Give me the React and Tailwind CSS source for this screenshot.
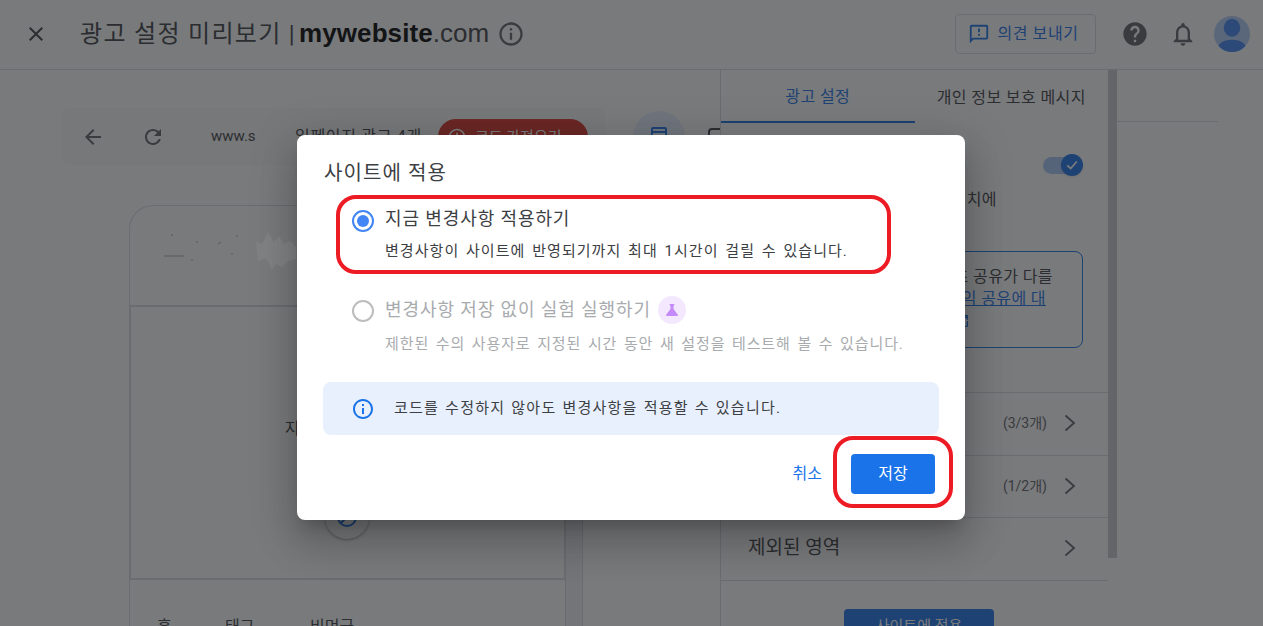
import React from "react";

const Icon = ({ d, className }) => (
  <svg viewBox="0 0 24 24" fill="currentColor" className={className}>
    <path d={d} />
  </svg>
);

const icons = {
  close: "M19 6.41L17.59 5 12 10.59 6.41 5 5 6.41 10.59 12 5 17.59 6.41 19 12 13.41 17.59 19 19 17.59 13.41 12z",
  info: "M11 7h2v2h-2zm0 4h2v6h-2zm1-9C6.48 2 2 6.48 2 12s4.48 10 10 10 10-4.48 10-10S17.52 2 12 2zm0 18c-4.41 0-8-3.59-8-8s3.59-8 8-8 8 3.59 8 8-3.59 8-8 8z",
  help: "M12 2C6.48 2 2 6.48 2 12s4.48 10 10 10 10-4.48 10-10S17.52 2 12 2zm1 17h-2v-2h2v2zm2.07-7.75l-.9.92C13.45 12.9 13 13.5 13 15h-2v-.5c0-1.1.45-2.1 1.17-2.83l1.24-1.26c.37-.36.59-.86.59-1.41 0-1.1-.9-2-2-2s-2 .9-2 2H8c0-2.21 1.79-4 4-4s4 1.79 4 4c0 .88-.36 1.68-.93 2.25z",
  bell: "M12 22c1.1 0 2-.9 2-2h-4c0 1.1.9 2 2 2zm6-6v-5c0-3.07-1.63-5.64-4.5-6.32V4c0-.83-.67-1.5-1.5-1.5s-1.5.67-1.5 1.5v.68C7.64 5.36 6 7.92 6 11v5l-2 2v1h16v-1l-2-2zm-2 1H8v-6c0-2.48 1.51-4.5 4-4.5s4 2.02 4 4.5v6z",
  feedback: "M20 2H4c-1.1 0-2 .9-2 2v18l4-4h14c1.1 0 2-.9 2-2V4c0-1.1-.9-2-2-2zm0 14H5.17L4 17.17V4h16v12zM11 12h2v2h-2zm0-6h2v4h-2z",
  back: "M20 11H7.83l5.59-5.59L12 4l-8 8 8 8 1.41-1.41L7.83 13H20v-2z",
  refresh: "M17.65 6.35C16.2 4.9 14.21 4 12 4c-4.42 0-7.99 3.58-7.99 8s3.57 8 7.99 8c3.73 0 6.84-2.55 7.73-6h-2.08c-.82 2.33-3.04 4-5.65 4-3.31 0-6-2.69-6-6s2.69-6 6-6c1.66 0 3.14.69 4.22 1.78L13 11h7V4l-2.35 2.35z",
  flask: "M19.8 18.4L14 10.67V6.5l1.35-1.69c.26-.33.03-.81-.39-.81H9.04c-.42 0-.65.48-.39.81L10 6.5v4.17L4.2 18.4c-.49.66-.02 1.6.8 1.6h14c.82 0 1.29-.94.8-1.6z",
  person: "M12 12.5a5.5 6 0 1 0 0-12 5.5 6 0 0 0 0 12zM12 14.5c-5 0-9 2-9 5 0 2.6 4 4.5 9 4.5s9-1.900 9-4.500c0-3-4-5-9-5z",
  open: "M19 19H5V5h7V3H5a2 2 0 0 0-2 2v14a2 2 0 0 0 2 2h14c1.100 0 2-.9 2-2v-7h-2v7zM14 3v2h3.590l-9.830 9.830 1.410 1.410L19 6.410V10h2V3h-7z",
};

const Chevron = () => (
  <svg viewBox="0 0 12 18" fill="none" stroke="currentColor" strokeWidth="1.8" className="w-3 h-[18px] text-[#5f6368]">
    <path d="M1.500 1.500 L10 9 L1.500 16.500" />
  </svg>
);

const SettingRow = ({ label, count }) => (
  <div className="h-[62.500px] border-b border-[#dadce0] flex items-center pl-[27px] pr-[32px] pb-[1px] text-[19px] text-[#3c4043]">
    <span>{label}</span>
    {count && <span className="ml-auto mr-[17px] text-sm text-[#5f6368]">{count}</span>}
    <span className={count ? "" : "ml-auto"}>
      <Chevron />
    </span>
  </div>
);

const Header = () => (
  <header className="h-[70px] border-b border-[#dadce0] flex items-center pl-6 pr-[13px] pb-[2px] shrink-0">
    <Icon d={icons.close} className="w-6 h-6 text-[#3c4043]" />
    <h1 className="ml-8 text-[24px] text-[#3c4043] tracking-[1.3px]">광고 설정 미리보기 |</h1>
    <span className="ml-[3px] text-[26px] font-bold text-black font-['Liberation_Sans'] tracking-[0.1px]">mywebsite</span>
    <span className="text-[26px] text-[#3c4043] font-['Liberation_Sans']">.com</span>
    <Icon d={icons.info} className="ml-[8px] w-7 h-7 text-[#5f6368]" />
    <button className="ml-auto w-[141px] h-[40px] border border-[#dadce0] rounded flex items-center justify-center gap-[7px] pr-1 text-[#1a73e8] text-base tracking-[0.6px]">
      <Icon d={icons.feedback} className="w-[22px] h-[22px]" />
      의견 보내기
    </button>
    <Icon d={icons.help} className="ml-[25px] w-7 h-7 text-[#5f6368]" />
    <Icon d={icons.bell} className="ml-[20px] w-7 h-7 text-[#5f6368]" />
    <div className="ml-[17px] w-9 h-9 rounded-full bg-[#b1cdfb] overflow-hidden flex items-center justify-center text-[#4285f4]">
      <Icon d={icons.person} className="w-9 h-9 mt-1" />
    </div>
  </header>
);

const PreviewPane = () => (
  <section className="w-[720px] shrink-0 flex flex-col relative overflow-hidden">
    <div className="mt-[38px] h-[57px] flex items-start shrink-0">
      <div className="ml-[62px] w-[543px] h-[57px] rounded-lg bg-[#f8f9fa] flex items-center pl-[19px] shrink-0">
        <Icon d={icons.back} className="w-6 h-6 text-[#5f6368]" />
        <Icon d={icons.refresh} className="ml-9 w-6 h-6 text-[#5f6368]" />
        <span className="ml-[46px] w-[47px] overflow-hidden text-[15px] text-[#3c4043]">www.s</span>
        <span className="ml-[37px] text-base text-[#3c4043] tracking-[0.7px] whitespace-nowrap">일페이지 광고 4개</span>
        <span className="absolute left-[438px] top-[49px] h-9 w-[150px] rounded-[18px] bg-[#d93025] flex items-center pl-[9px] gap-[8px] text-[15px] text-white">
          <Icon d={icons.info} className="w-5 h-5 rotate-180" />
          코드 가져오기
        </span>
      </div>
      <span className="ml-[28px] mt-[3px] w-[52px] h-[52px] rounded-full bg-[#e8f0fe] flex items-center justify-center text-[#1a73e8] shrink-0">
        <svg viewBox="0 0 16 20" fill="none" stroke="currentColor" strokeWidth="2" className="w-[16px] h-[20px]">
          <rect x="1" y="1" width="14" height="18" rx="1" />
          <path d="M1 5 H15" />
        </svg>
      </span>
      <span className="ml-[23px] mt-[20px] w-[20px] h-6 border-2 border-[#3c4043] rounded-sm shrink-0" />
    </div>
    <div className="flex-1 flex mt-[40px] ml-[129px] min-h-0">
      <div className="w-[437px] shrink-0 border-x border-t border-[#dadce0] rounded-t-[24px] flex flex-col">
        <div className="h-[99px] shrink-0" />
        <div className="h-[275px] border-2 border-[#dadce0] -ml-px -mr-px shrink-0 flex flex-col items-center justify-center pb-[28px] relative">
          <span className="text-base text-[#3c4043]">지정된 페이지 보기</span>
          <span className="absolute left-[194px] top-[188px] w-[44px] h-[44px] rounded-full bg-white shadow-[0_1px_3px_rgba(0,0,0,0.4)] flex items-center justify-center text-[#1a73e8]">
            <svg viewBox="0 0 24 24" fill="none" stroke="currentColor" strokeWidth="2" className="w-6 h-6">
              <circle cx="12" cy="12" r="9" />
              <path d="M6 18 L17 7" />
            </svg>
          </span>
        </div>
        <nav className="flex text-base text-[#3c4043] pl-[27px] pt-[35px]">
          <span className="w-[68px]">홈</span>
          <span className="w-[85px]">태그</span>
          <span>비먼금</span>
        </nav>
      </div>
      <div className="w-[17px] bg-[#f1f3f4] border-r border-[#dadce0] shrink-0" />
    </div>
  </section>
);

const SettingsPane = () => (
  <aside className="w-[388px] shrink-0 border-l border-[#dadce0] flex flex-col text-[#3c4043]">
    <div className="flex h-[53px] shrink-0 text-base tracking-[0.4px] pt-[3px]">
      <div className="w-[194px] -mt-[3px] pt-[3px] border-b-2 border-[#1a73e8] text-[#1a73e8] flex items-center justify-center">광고 설정</div>
      <div className="w-[194px] flex items-center justify-center">개인 정보 보호 메시지</div>
    </div>
    <div className="h-[269px] shrink-0 flex flex-col items-end pr-[25px] relative">
      <div className="mt-[34px] mr-[6px] w-[34px] h-[17px] rounded-full bg-[#a8c7fa] relative">
        <span className="absolute -right-[6px] -top-[3px] w-[22px] h-[22px] rounded-full bg-[#1a73e8] shadow flex items-center justify-center">
          <svg viewBox="0 0 16 16" fill="none" stroke="white" strokeWidth="2" className="w-[14px] h-[14px]">
            <path d="M2.500 8.500 L6.500 12 L13.500 4" />
          </svg>
        </span>
      </div>
      <p className="mt-[14px] mr-[86px] text-base tracking-[0.4px] whitespace-nowrap">광고 위치에</p>
      <div className="mt-[39px] w-[334px] h-[97px] border border-[#1a73e8] rounded-lg pr-[29px] pt-[14px] text-base tracking-[0.4px] leading-[22px] text-right whitespace-nowrap">
        <p>콘텐츠 공유가 다를</p>
        <p className="text-[#1a73e8] underline pr-[7px]">수익 공유에 대</p>
        <p className="flex justify-end pr-[83px] text-[#1a73e8] pt-[3px]"><Icon d={icons.open} className="w-4 h-4" /></p>
      </div>
    </div>
    <div className="border-t border-[#dadce0]">
      <SettingRow label="광고 형식" count="(3/3개)" />
      <SettingRow label="광고 위치" count="(1/2개)" />
      <SettingRow label="제외된 영역" />
    </div>
    <div className="pt-7 pl-[123px]">
      <button className="w-[150px] h-9 bg-[#1a73e8] text-white text-[15px] rounded">사이트에 적용</button>
    </div>
  </aside>
);

const Radio = ({ on }) =>
  on ? (
    <span className="w-[22px] h-[22px] rounded-full border-2 border-[#4285f4] flex items-center justify-center shrink-0">
      <span className="w-3 h-3 rounded-full bg-[#4285f4]" />
    </span>
  ) : (
    <span className="block w-[22px] h-[22px] rounded-full border-2 border-[#bdbdbd] shrink-0" />
  );

const ApplyDialog = () => (
  <div className="relative w-[668px] h-[385px] bg-white rounded-lg shadow-[0_11px_15px_-7px_rgba(0,0,0,0.2),0_24px_38px_3px_rgba(0,0,0,0.14),0_9px_46px_8px_rgba(0,0,0,0.12)] px-[27px] pt-[25px] flex flex-col">
    <h2 className="text-[20px] leading-[26px] text-[#3c4043] tracking-[1.1px]">사이트에 적용</h2>
    <div className="mt-[20px] pl-7 flex items-start gap-[11px]">
      <span className="mt-[4px]"><Radio on /></span>
      <div>
        <p className="text-[18px] leading-[26px] text-[#3c4043] tracking-[0.9px]">지금 변경사항 적용하기</p>
        <p className="mt-[9px] text-[15px] leading-5 text-[#3c4043] tracking-[1.05px] [word-spacing:2px] whitespace-nowrap">변경사항이 사이트에 반영되기까지 최대 1시간이 걸릴 수 있습니다.</p>
      </div>
    </div>
    <div className="mt-[35px] pl-7 flex items-start gap-[11px]">
      <span className="mt-[4px]"><Radio /></span>
      <div>
        <p className="flex items-center text-[18px] leading-[26px] text-[#a8abae] tracking-[0.9px]">
          변경사항 저장 없이 실험 실행하기
          <span className="ml-[7px] w-[28px] h-[28px] rounded-full bg-[#f3e8fd] flex items-center justify-center">
            <Icon d={icons.flask} className="w-[18px] h-[18px] text-[#c58af9]" />
          </span>
        </p>
        <p className="mt-[10px] text-[15px] leading-5 text-[#a8abae] tracking-[0.9px] [word-spacing:2px] whitespace-nowrap">제한된 수의 사용자로 지정된 시간 동안 새 설정을 테스트해 볼 수 있습니다.</p>
      </div>
    </div>
    <div className="mt-[28px] h-[53px] rounded-lg bg-[#e8f0fe] flex items-center pl-[28px] gap-[19px] shrink-0 -mr-[1px] -ml-px">
      <Icon d={icons.info} className="w-6 h-6 text-[#1a73e8]" />
      <span className="text-[15px] text-[#3c4043] tracking-[1.25px] [word-spacing:1px]">코드를 수정하지 않아도 변경사항을 적용할 수 있습니다.</span>
    </div>
    <div className="mt-[19px] flex items-center justify-end pr-[3px]">
      <button className="text-base text-[#1a73e8]">취소</button>
      <button className="ml-[29px] w-[84px] h-10 rounded bg-[#1a73e8] text-white text-base">저장</button>
    </div>
    {/* red annotation marks */}
    <div className="absolute left-[39px] top-[60px] w-[555px] h-[79px] border-4 border-[#ed1c24] rounded-[20px]" />
    <div className="absolute left-[536px] top-[301px] w-[120px] h-[72px] border-4 border-[#ed1c24] rounded-[20px]" />
  </div>
);

export default function App() {
  return (
    <div className="relative w-[1263px] h-[626px] overflow-hidden bg-white flex flex-col font-['Roboto','Noto_Sans_CJK_KR',sans-serif]">
      <Header />
      <div className="flex flex-1 min-h-0">
        <PreviewPane />
        <SettingsPane />
        <div className="w-[9px] h-[488px] bg-[#c9cacc] shrink-0" />
        <div className="w-[101px] h-[52px] border-b border-[#dadce0] shrink-0" />
      </div>
      <div className="absolute inset-0 bg-[#202124]/60 pt-[135px] pl-[297px]">
        <ApplyDialog />
      </div>
      {/* smudged-out site logo in the preview */}
      <svg viewBox="0 0 140 45" className="absolute left-[156px] top-[228px] w-[140px] h-[45px]">
        <path d="M100 14l6 2 6-12 6 10 5-6 5 8 6-3 6 6v12l-8 2-6 6-6-3-4 6-6-12-8 3z" fill="#fff" opacity="0.06" />
        <path d="M15 7h2M40 14h2M62 16l3-2M80 8h2M8 28h20M35 32h2M75 26h2" stroke="#444" strokeWidth="1" opacity="0.6" />
      </svg>
    </div>
  );
}
